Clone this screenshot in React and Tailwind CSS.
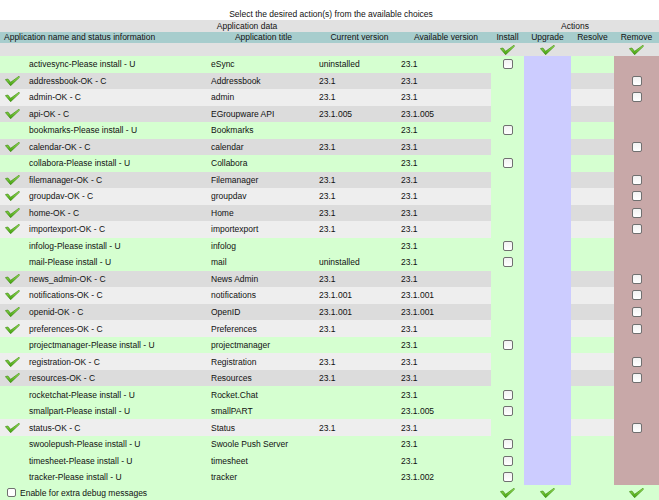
import React from "react";

const COLS =
  "grid grid-cols-[26px_182px_108px_82px_93px_33px_47px_43px_45px]";
const GREEN = "bg-[#d5ffd0]";

const apps = [
  ["activesync", "eSync", "uninstalled", "23.1", true, false],
  ["addressbook", "Addressbook", "23.1", "23.1", false, true],
  ["admin", "admin", "23.1", "23.1", false, true],
  ["api", "EGroupware API", "23.1.005", "23.1.005", false, false],
  ["bookmarks", "Bookmarks", "", "23.1", true, false],
  ["calendar", "calendar", "23.1", "23.1", false, true],
  ["collabora", "Collabora", "", "23.1", true, false],
  ["filemanager", "Filemanager", "23.1", "23.1", false, true],
  ["groupdav", "groupdav", "23.1", "23.1", false, true],
  ["home", "Home", "23.1", "23.1", false, true],
  ["importexport", "importexport", "23.1", "23.1", false, true],
  ["infolog", "infolog", "", "23.1", true, false],
  ["mail", "mail", "uninstalled", "23.1", true, false],
  ["news_admin", "News Admin", "23.1", "23.1", false, true],
  ["notifications", "notifications", "23.1.001", "23.1.001", false, true],
  ["openid", "OpenID", "23.1.001", "23.1.001", false, true],
  ["preferences", "Preferences", "23.1", "23.1", false, true],
  ["projectmanager", "projectmanager", "", "23.1", true, false],
  ["registration", "Registration", "23.1", "23.1", false, true],
  ["resources", "Resources", "23.1", "23.1", false, true],
  ["rocketchat", "Rocket.Chat", "", "23.1", true, false],
  ["smallpart", "smallPART", "", "23.1.005", true, false],
  ["status", "Status", "23.1", "23.1", false, true],
  ["swoolepush", "Swoole Push Server", "", "23.1", true, false],
  ["timesheet", "timesheet", "", "23.1", true, false],
  ["tracker", "tracker", "", "23.1.002", true, false],
];

function Tick() {
  return (
    <svg width="15" height="10" viewBox="0 0 15 10" className="block">
      <defs>
        <linearGradient id="tg" x1="0" y1="0" x2="0" y2="1">
          <stop offset="0" stopColor="#a6ec5e" />
          <stop offset="1" stopColor="#3d9c0a" />
        </linearGradient>
      </defs>
      <polygon
        points="0.4,3.6 2.9,3.0 5.6,6.3 13.9,0.3 14.7,1.1 5.6,9.7"
        fill="url(#tg)"
        stroke="#2f7f05"
        strokeWidth="0.6"
        strokeLinejoin="round"
      />
    </svg>
  );
}

function Box() {
  return (
    <div className="w-[10px] h-[10px] border border-[#707070] rounded-[2px] bg-gradient-to-b from-[#f2f2f2] to-white" />
  );
}

function Row({ a, i }) {
  const [name, title, cur, avail, install, remove] = a;
  const bg = install ? GREEN : i % 2 ? "bg-[#dcdcdc]" : "bg-[#eeeeee]";
  return (
    <div className={`${COLS} h-[16.53px]`}>
      <div className={`${bg} flex items-center pl-[5px]`}>
        {!install && <Tick />}
      </div>
      <div className={`${bg} flex items-center pl-[3px] whitespace-nowrap`}>
        {name}
        {install ? "-Please install - U" : "-OK - C"}
      </div>
      <div className={`${bg} flex items-center pl-[3px] whitespace-nowrap`}>
        {title}
      </div>
      <div className={`${bg} flex items-center pl-[3px] whitespace-nowrap`}>
        {cur}
      </div>
      <div className={`${bg} flex items-center pl-[3px] whitespace-nowrap`}>
        {avail}
      </div>
      <div className={`${GREEN} flex items-center justify-center`}>
        {install && <Box />}
      </div>
      <div className="bg-[#ccccff]" />
      <div className={bg} />
      <div className="bg-[#c8a8a8] flex items-center justify-center pl-[1px]">
        {remove && <Box />}
      </div>
    </div>
  );
}

export default function App() {
  return (
    <div className="w-[659px] h-[500px] overflow-hidden bg-white font-['Liberation_Sans',Arial,sans-serif] text-[8.5px] leading-[10px] text-[#111111]">
      <div className="h-[20px] pt-[9px] pl-[3px] text-center whitespace-nowrap">
        Select the desired action(s) from the available choices
      </div>
      <div className={`${COLS} h-[12px] leading-[12px] bg-[#e1e1e1]`}>
        <div className="col-span-5 text-center pl-[3px]">Application data</div>
        <div className="col-span-4 text-center">Actions</div>
      </div>
      <div className={`${COLS} h-[11px] leading-[11px] bg-[#a7cdcd] whitespace-nowrap`}>
        <div className="col-span-2 pl-[4px]">
          Application name and status information
        </div>
        <div className="text-center pl-[3px]">Application title</div>
        <div className="text-center pl-[5px]">Current version</div>
        <div className="text-center pl-[3px]">Available version</div>
        <div className="text-center">Install</div>
        <div className="text-center">Upgrade</div>
        <div className="text-center">Resolve</div>
        <div className="text-center">Remove</div>
      </div>
      <div className={`${COLS} h-[13px] bg-[#e1e1e1]`}>
        <div className="col-span-5" />
        <div className="flex items-center justify-center">
          <Tick />
        </div>
        <div className="flex items-center justify-center">
          <Tick />
        </div>
        <div />
        <div className="flex items-center justify-center">
          <Tick />
        </div>
      </div>
      {apps.map((a, i) => (
        <Row key={a[0]} a={a} i={i} />
      ))}
      <div className={`${COLS} h-[20px] ${GREEN}`}>
        <div className="col-span-5 flex items-start pt-[3px] pl-[7px] gap-[4px] whitespace-nowrap">
          <div className="w-[9px] h-[9px] border border-[#707070] rounded-[2px] bg-white" />
          <span className="leading-[10px]">Enable for extra debug messages</span>
        </div>
        <div className="flex justify-center pt-[3px]">
          <Tick />
        </div>
        <div className="flex justify-center pt-[3px]">
          <Tick />
        </div>
        <div />
        <div className="flex justify-center pt-[3px]">
          <Tick />
        </div>
      </div>
    </div>
  );
}
